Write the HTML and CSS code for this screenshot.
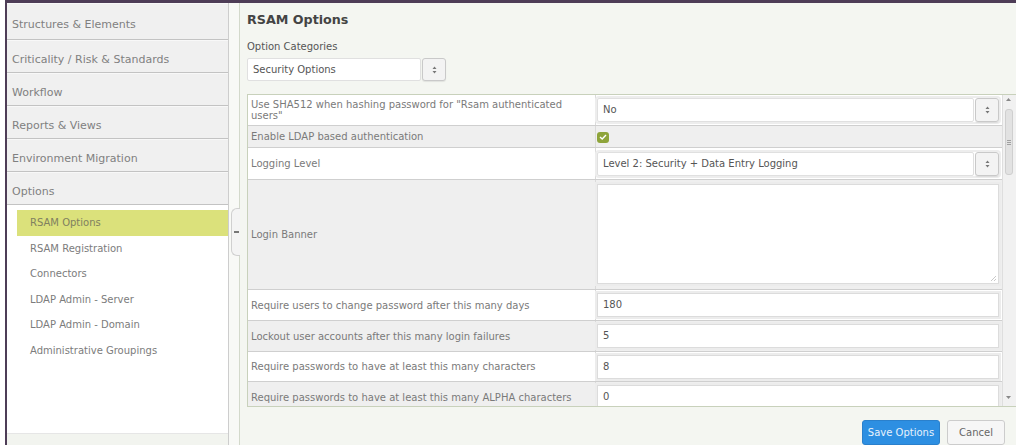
FILE: index.html
```html
<!DOCTYPE html>
<html lang="en">
<head>
<meta charset="utf-8">
<title>RSAM Options</title>
<link rel="stylesheet" href="styles.css">
</head>
<body>
<div class="frame">
  <aside class="sidebar">
    <nav class="groups">
      <div class="group first">Structures &amp; Elements</div>
      <div class="group">Criticality / Risk &amp; Standards</div>
      <div class="group">Workflow</div>
      <div class="group">Reports &amp; Views</div>
      <div class="group">Environment Migration</div>
      <div class="group">Options</div>
    </nav>
    <ul class="sub">
      <li class="active">RSAM Options</li>
      <li>RSAM Registration</li>
      <li>Connectors</li>
      <li>LDAP Admin - Server</li>
      <li>LDAP Admin - Domain</li>
      <li>Administrative Groupings</li>
    </ul>
    <div class="side-foot"></div>
  </aside>

  <div class="gutter">
    <div class="handle"><span class="dash"></span></div>
  </div>

  <main class="content">
    <h1 class="title">RSAM Options</h1>
    <div class="cat-label">Option Categories</div>
    <div class="select cat-select">
      <span class="sel-field">Security Options</span>
      <span class="sel-btn"><svg width="5" height="8" viewBox="0 0 5 8"><path d="M2.5 0.5 L4.5 3 L0.5 3 Z M2.5 7.5 L4.5 5 L0.5 5 Z" fill="#777"/></svg></span>
    </div>

    <div class="grid-wrap">
      <div class="rows">
        <div class="row r1 white">
          <div class="label">Use SHA512 when hashing password for "Rsam authenticated users"</div>
          <div class="value">
            <div class="select wide">
              <span class="sel-field">No</span>
              <span class="sel-btn"><svg width="5" height="8" viewBox="0 0 5 8"><path d="M2.5 0.5 L4.5 3 L0.5 3 Z M2.5 7.5 L4.5 5 L0.5 5 Z" fill="#777"/></svg></span>
            </div>
          </div>
        </div>
        <div class="row r2 grey">
          <div class="label">Enable LDAP based authentication</div>
          <div class="value">
            <span class="check"><svg width="8" height="6" viewBox="0 0 8 6"><path d="M1 3 L3.2 5 L7 1" fill="none" stroke="#fff" stroke-width="1.4"/></svg></span>
          </div>
        </div>
        <div class="row r3 white">
          <div class="label">Logging Level</div>
          <div class="value">
            <div class="select wide">
              <span class="sel-field">Level 2: Security + Data Entry Logging</span>
              <span class="sel-btn"><svg width="5" height="8" viewBox="0 0 5 8"><path d="M2.5 0.5 L4.5 3 L0.5 3 Z M2.5 7.5 L4.5 5 L0.5 5 Z" fill="#777"/></svg></span>
            </div>
          </div>
        </div>
        <div class="row r4 grey">
          <div class="label">Login Banner</div>
          <div class="value">
            <div class="textarea">
              <svg class="grip" width="6" height="6" viewBox="0 0 6 6"><path d="M6 1 L1 6 M6 4 L4 6" stroke="#bbb" stroke-width="0.8"/></svg>
            </div>
          </div>
        </div>
        <div class="row r5 white">
          <div class="label">Require users to change password after this many days</div>
          <div class="value"><div class="input">180</div></div>
        </div>
        <div class="row r6 grey">
          <div class="label">Lockout user accounts after this many login failures</div>
          <div class="value"><div class="input">5</div></div>
        </div>
        <div class="row r7 white">
          <div class="label">Require passwords to have at least this many characters</div>
          <div class="value"><div class="input">8</div></div>
        </div>
        <div class="row r8 grey">
          <div class="label">Require passwords to have at least this many ALPHA characters</div>
          <div class="value"><div class="input">0</div></div>
        </div>
      </div>
      <div class="scrollbar">
        <svg class="arrow" width="5" height="3" viewBox="0 0 5 3"><path d="M2.5 0 L5 3 L0 3 Z" fill="#888"/></svg>
        <div class="track">
          <div class="thumb"><span class="gripline"></span><span class="gripline"></span><span class="gripline"></span></div>
        </div>
        <svg class="arrow" width="5" height="3" viewBox="0 0 5 3"><path d="M0 0 L5 0 L2.5 3 Z" fill="#888"/></svg>
      </div>
    </div>

    <div class="footer">
      <button class="btn save">Save Options</button>
      <button class="btn cancel">Cancel</button>
    </div>
  </main>
</div>
</body>
</html>
```

FILE: styles.css
```css
* { box-sizing: border-box; }

html, body {
  margin: 0;
  padding: 0;
  background: #ffffff;
  overflow: hidden;
}

body {
  font-family: "DejaVu Sans", Verdana, sans-serif;
  font-size: 10px;
  color: #666;
}

/* outer window frame */
.frame {
  margin-left: 5px;
  height: 445px;
  border-top: 3px solid #4e3d57;
  border-left: 2px solid #4e3d57;
  display: flex;
}

/* ---------- left navigation ---------- */
.sidebar {
  width: 222px;
  flex: none;
  display: flex;
  flex-direction: column;
  border-right: 1px solid #cdcdcd;
  background: #fff;
}

.groups { background: #f0f0f0; }

.group {
  height: 33px;
  padding: 12px 0 0 5px;
  font-size: 11px;
  line-height: 15px;
  color: #808080;
  border-bottom: 1px solid #c3c3c3;
  box-shadow: inset 0 1px 0 #f8f8f8;
}

.group.first {
  height: 37px;
  padding-top: 14px;
}

.sub {
  list-style: none;
  margin: 0;
  padding: 5px 0 0 0;
  flex: 1;
}

.sub li {
  height: 25.6px;
  line-height: 25.6px;
  padding-left: 23px;
  font-size: 10px;
  color: #7c7c7c;
}

.sub li.active {
  margin-left: 10px;
  padding-left: 13px;
  background: #dbe17b;
  color: #808060;
}

.side-foot {
  height: 12px;
  background: #f2f4ef;
  border-top: 1px solid #e6e6e6;
}

/* ---------- collapse gutter ---------- */
.gutter {
  width: 11px;
  flex: none;
  position: relative;
  background: #f8f9f6;
  border-right: 1px solid #d3d9cb;
}

.handle {
  position: absolute;
  left: 2px;
  top: 205px;
  width: 9px;
  height: 48px;
  border: 1px solid #d0d0d0;
  border-right: none;
  border-radius: 6px 0 0 6px;
  background: #f4f4f4;
  display: flex;
  align-items: center;
  justify-content: center;
}

.dash {
  width: 5px;
  height: 2px;
  background: #777;
}

/* ---------- main content ---------- */
.content {
  flex: 1;
  min-width: 0;
  background: #f4f6f1;
  padding-left: 7px;
  display: flex;
  flex-direction: column;
}

.title {
  margin: 9px 0 0 0;
  font-size: 12.7px;
  line-height: 16px;
  font-weight: bold;
  color: #444;
}

.cat-label {
  margin-top: 13px;
  font-size: 10px;
  line-height: 12px;
  color: #555;
}

.select {
  display: flex;
  gap: 1px;
  height: 23px;
}

.cat-select {
  margin-top: 5px;
  width: 199px;
}

.sel-field {
  flex: 1;
  background: #fff;
  border: 1px solid #e0e0e0;
  border-radius: 2px;
  padding-left: 5px;
  font-size: 10px;
  line-height: 21px;
  color: #555;
  white-space: nowrap;
  overflow: hidden;
}

.sel-btn {
  width: 24px;
  flex: none;
  background: #f3f3f3;
  border: 1px solid #c9c9c9;
  border-radius: 3px;
  box-shadow: 0 1px 1px rgba(0,0,0,0.08);
  display: flex;
  align-items: center;
  justify-content: center;
}

/* ---------- options grid ---------- */
.grid-wrap {
  margin-top: 13px;
  height: 315px;
  display: flex;
  border: 1px solid #c8d1bb;
  border-right: none;
  overflow: hidden;
  background: #fff;
}

.rows {
  width: 754px;
  flex: none;
  overflow: hidden;
}

.row {
  display: grid;
  grid-template-columns: 347px 1fr;
  border-bottom: 1px solid #cfcfcf;
}

.row.white { background: #ffffff; }
.row.grey { background: #efefef; }

.r1 { height: 31px; }
.r2 { height: 22px; }
.r3 { height: 32px; }
.r4 { height: 110px; }
.r5 { height: 31px; }
.r6 { height: 31px; }
.r7 { height: 30px; }
.r8 { height: 31px; }

.label {
  padding: 0 8px 0 3px;
  display: flex;
  align-items: center;
  font-size: 10px;
  line-height: 11px;
  color: #7a7a7a;
}

.value {
  border-left: 1px solid #dadada;
  padding: 0 3px 0 1px;
  display: flex;
  align-items: center;
}

.select.wide {
  width: 100%;
  height: 24px;
  box-shadow: 0 0 0 2px #ededed;
  border-radius: 2px;
}

.check {
  width: 12px;
  height: 11px;
  border-radius: 3px;
  background: #8ea43a;
  display: flex;
  align-items: center;
  justify-content: center;
  margin-top: 1px;
}

.textarea {
  position: relative;
  width: 100%;
  height: 100px;
  margin-bottom: 1px;
  background: #fff;
  border: 1px solid #dcdcdc;
  box-shadow: 0 0 0 2px #ececec;
}

.grip {
  position: absolute;
  right: 2px;
  bottom: 2px;
}

.input {
  width: 100%;
  height: 24px;
  background: #fff;
  border: 1px solid #dcdcdc;
  box-shadow: 0 0 0 2px #ececec;
  padding-left: 5px;
  font-size: 10px;
  line-height: 22px;
  color: #555;
}

.scrollbar {
  width: 14px;
  flex: none;
  background: #f1f1f1;
  border-left: 1px solid #dedede;
  display: flex;
  flex-direction: column;
  align-items: center;
  padding: 3px 0 7px 0;
}

.arrow { flex: none; margin-left: -2px; }

.track {
  flex: 1;
  width: 100%;
  padding: 8px 0 0 2px;
}

.thumb {
  width: 8px;
  height: 66px;
  background: #e2e2e2;
  border: 1px solid #cfcfcf;
  border-radius: 3px;
  display: flex;
  flex-direction: column;
  justify-content: center;
  align-items: center;
  gap: 1px;
}

.gripline {
  width: 4px;
  height: 1px;
  background: #a0a0a0;
}

/* ---------- footer ---------- */
.footer {
  flex: 1;
  display: flex;
  justify-content: flex-end;
  align-items: flex-start;
  gap: 7px;
  padding: 13px 11px 0 0;
}

.btn {
  height: 25px;
  font-family: "DejaVu Sans", Verdana, sans-serif;
  font-size: 10px;
  border-radius: 3px;
  padding: 0;
  cursor: pointer;
}

.save {
  width: 78px;
  background: #2d8fe2;
  border: 1px solid #2a80cc;
  color: #e8f2fc;
}

.cancel {
  width: 58px;
  background: #f6f6f6;
  border: 1px solid #cccccc;
  color: #666;
}
```
